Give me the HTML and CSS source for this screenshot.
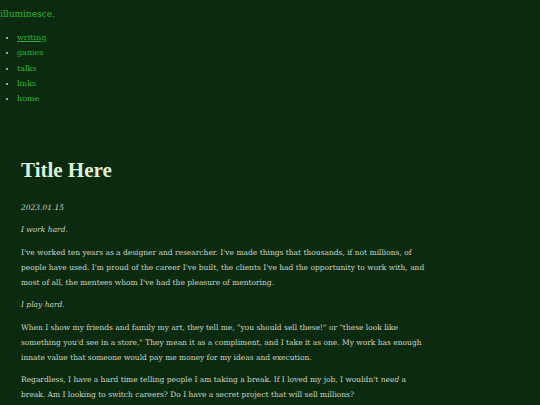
FILE: index.html
```html
<!DOCTYPE html>
<html>
<head>
<meta charset="utf-8">
<link rel="stylesheet" href="styles.css">
</head>
<body>
<header class="site-header">
  <div class="brand">illuminesce.</div>
  <ul class="nav">
    <li><a class="active" href="#">writing</a></li>
    <li><a href="#">games</a></li>
    <li><a href="#">talks</a></li>
    <li><a href="#">links</a></li>
    <li><a href="#">home</a></li>
  </ul>
</header>
<main class="post">
  <h1 class="title">Title Here</h1>
  <p class="date">2023.01.15</p>
  <p class="lead">I work hard.</p>
  <p>I've worked ten years as a designer and researcher. I've made things that thousands, if not millions, of people have used. I'm proud of the career I've built, the clients I've had the opportunity to work with, and most of all, the mentees whom I've had the pleasure of mentoring.</p>
  <p class="lead">I play hard.</p>
  <p>When I show my friends and family my art, they tell me, "you should sell these!" or "these look like something you'd see in a store." They mean it as a compliment, and I take it as one. My work has enough innate value that someone would pay me money for my ideas and execution.</p>
  <p>Regardless, I have a hard time telling people I am taking a break. If I loved my job, I wouldn't <em>need</em> a break. Am I looking to switch careers? Do I have a secret project that will sell millions?</p>
</main>
</body>
</html>
```

FILE: styles.css
```css
html, body {
  margin: 0;
  padding: 0;
  background: #0c2a10;
}
body {
  font-family: "DejaVu Serif", "Liberation Serif", serif;
  color: #c9d6c6;
  height: 405px;
  overflow: hidden;
}
.site-header {
  padding-top: 8px;
}
.brand {
  font-size: 9px;
  line-height: 12px;
  color: #2fb52f;
}
.nav {
  margin: 10px 0 0 0;
  padding: 0 0 0 17px;
  font-size: 8px;
  line-height: 15.25px;
  color: #d0d0d0;
}
.nav a {
  color: #2fb52f;
  text-decoration: none;
}
.nav a.active {
  text-decoration: underline;
}
.post {
  padding: 52px 0 0 21px;
  width: 408px;
}
.title {
  margin: 0;
  font-family: "Liberation Serif", "DejaVu Serif", serif;
  font-size: 21px;
  line-height: 24px;
  font-weight: bold;
  color: #dcefd8;
}
.post p {
  margin: 0 0 7.5px 0;
  font-size: 7.5px;
  line-height: 15px;
}
.post .date {
  margin-top: 17.5px;
  font-style: italic;
}
.post .lead {
  font-style: italic;
}
```
